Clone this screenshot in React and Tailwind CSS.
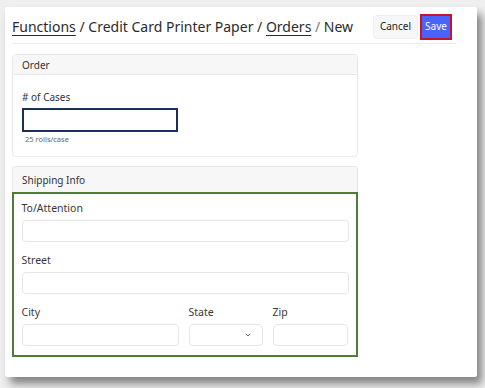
import React, { useState } from 'react';

const font = { fontFamily: '"Noto Sans", "Open Sans", sans-serif' };

function Field({ label, className = '', children }) {
  return (
    <div className={`flex flex-col ${className}`}>
      <label className="text-[10.5px] leading-[14px] text-[#383838] mb-[5px]">{label}</label>
      {children}
    </div>
  );
}

export default function App() {
  const [cases, setCases] = useState('');

  return (
    <div className="w-[485px] h-[388px] bg-[#efefef] pt-[7px] pl-[5px]" style={font}>
      <div className="w-[472px] h-[370px] bg-white rounded-[2px] shadow-[5px_7px_9px_rgba(0,0,0,0.45)] pl-[7px]">
        {/* header */}
        <div className="flex items-center w-[443px] h-[37px] border-b border-[#eeeeee]">
          <h1 className="text-[14px] text-[#2b2b2b] whitespace-nowrap mt-[2px]">
            <span className="underline underline-offset-[3px]">Functions</span>
            {' / '}
            <span>Credit Card Printer Paper</span>
            {' / '}
            <span className="underline underline-offset-[3px]">Orders</span>
            <span className="text-[#777]">{' / '}</span>
            <span>New</span>
          </h1>
          <div className="ml-auto flex items-center gap-[2px] mt-[3px] pr-[3px]">
            <button type="button" className="h-[24px] w-[45px] text-[10px] text-[#222] bg-[#f6f7f8] border border-[#eceef0] rounded-[4px]">
              Cancel
            </button>
            <button type="button" className="h-[26px] w-[32px] text-[10px] text-white bg-[#4a63ff] border-2 border-[#c81428]">
              Save
            </button>
          </div>
        </div>

        <div className="w-[346px]">
          {/* Order card */}
          <div className="mt-[10px] border border-[#e8e8e8] rounded-[4px] h-[103px]">
            <div className="h-[20px] bg-[#f7f7f7] border-b border-[#e8e8e8] px-[9px] text-[10px] leading-[20px] text-[#333] rounded-t-[4px]">
              Order
            </div>
            <div className="px-[9px] pt-[16px]">
              <label className="block text-[10px] leading-[13px] text-[#333]">
                # of Cases
              </label>
              <input
                value={cases}
                onChange={(e) => setCases(e.target.value)}
                className="block mt-[4px] w-[156px] h-[24px] border-2 border-[#1b2f5c] outline-none px-1 text-[11px]"
              />
              <div className="mt-[2px] ml-[3px] text-[7.5px] leading-[10px] text-[#666]">25 rolls/case</div>
            </div>
          </div>

          {/* Shipping card */}
          <div className="mt-[9px]">
            <div className="h-[26px] bg-[#f7f7f7] border border-b-0 border-[#e8e8e8] rounded-t-[4px] px-[9px] text-[10px] leading-[26px] text-[#333]">
              Shipping Info
            </div>
            <div className="border-[2.5px] border-[#4f7d33] h-[165px] px-[7.5px] pt-[7px]">
              <Field label="To/Attention">
                <input className="h-[22px] border border-[#e6e6e6] rounded-[4px] outline-none" />
              </Field>
              <Field label="Street" className="mt-[11px]">
                <input className="h-[22px] border border-[#e6e6e6] rounded-[4px] outline-none" />
              </Field>
              <div className="flex mt-[11px] gap-[10px]">
                <Field label="City" className="w-[157px]">
                  <input className="h-[22px] border border-[#e6e6e6] rounded-[4px] outline-none" />
                </Field>
                <Field label="State" className="w-[74px]">
                  <div className="h-[22px] border border-[#e6e6e6] rounded-[4px] flex items-center justify-end pr-[11px]">
                    <svg width="6" height="4" viewBox="0 0 6 4" fill="none">
                      <path d="M0.8 0.8l2.2 2.2L5.2 0.8" stroke="#666" strokeWidth="1" />
                    </svg>
                  </div>
                </Field>
                <Field label="Zip" className="w-[75px]">
                  <input className="h-[22px] border border-[#e6e6e6] rounded-[4px] outline-none" />
                </Field>
              </div>
            </div>
          </div>
        </div>
      </div>
    </div>
  );
}
